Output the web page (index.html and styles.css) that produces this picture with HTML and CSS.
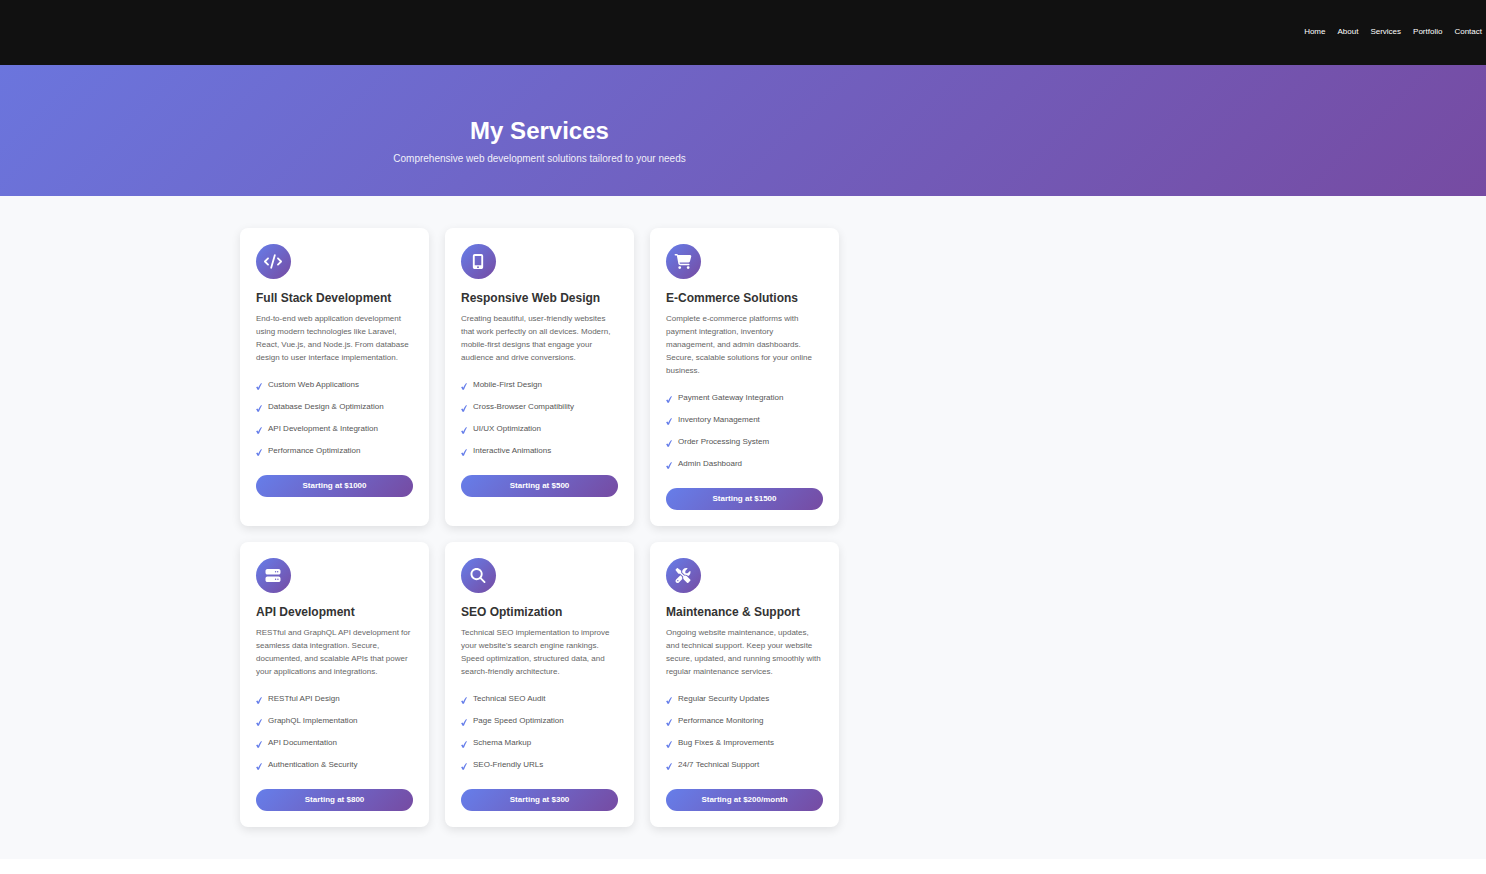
FILE: index.html
```html
<!DOCTYPE html>
<html lang="en">
<head>
<meta charset="utf-8">
<title>My Services</title>
<link rel="stylesheet" href="styles.css">
</head>
<body>
<svg class="sprite" aria-hidden="true">
  <symbol id="code" viewBox="0 0 640 512"><path d="M392.8 1.2c-17-4.9-34.7 5-39.6 22l-128 448c-4.9 17 5 34.7 22 39.6s34.7-5 39.6-22l128-448c4.9-17-5-34.7-22-39.6zm80.6 120.1c-12.5 12.5-12.5 32.8 0 45.3L562.7 256l-89.4 89.4c-12.5 12.5-12.5 32.8 0 45.3s32.8 12.5 45.3 0l112-112c12.5-12.5 12.5-32.8 0-45.3l-112-112c-12.5-12.5-32.8-12.5-45.3 0zm-306.7 0c-12.5-12.5-32.8-12.5-45.3 0l-112 112c-12.5 12.5-12.5 32.8 0 45.3l112 112c12.5 12.5 32.8 12.5 45.3 0s12.5-32.8 0-45.3L77.3 256l89.4-89.4c12.5-12.5 12.5-32.8 0-45.3z"/></symbol>
  <symbol id="mobile" viewBox="0 0 384 512"><path d="M16 64C16 28.7 44.7 0 80 0H304c35.3 0 64 28.7 64 64V448c0 35.3-28.7 64-64 64H80c-35.3 0-64-28.7-64-64V64zM224 448a32 32 0 1 0 -64 0 32 32 0 1 0 64 0zM304 64H80V384H304V64z" fill-rule="evenodd"/></symbol>
  <symbol id="cart" viewBox="0 0 576 512"><path d="M0 24C0 10.7 10.7 0 24 0H69.5c22 0 41.5 12.8 50.6 32h411c26.3 0 45.5 25 38.6 50.4l-41 152.3c-8.5 31.4-37 53.3-69.5 53.3H170.7l5.4 28.5c2.2 11.3 12.1 19.5 23.6 19.5H488c13.3 0 24 10.7 24 24s-10.7 24-24 24H199.7c-34.6 0-64.3-24.6-70.7-58.5L77.4 54.5c-.7-3.8-4-6.5-7.9-6.5H24C10.7 48 0 37.3 0 24zM128 464a48 48 0 1 1 96 0 48 48 0 1 1 -96 0zm336-48a48 48 0 1 1 0 96 48 48 0 1 1 0-96z"/></symbol>
  <symbol id="server" viewBox="0 0 512 512"><path fill-rule="evenodd" d="M64 32C28.7 32 0 60.7 0 96v64c0 35.3 28.7 64 64 64H448c35.3 0 64-28.7 64-64V96c0-35.3-28.7-64-64-64H64zm280 72a24 24 0 1 1 0 48 24 24 0 1 1 0-48zm48 24a24 24 0 1 1 48 0 24 24 0 1 1 -48 0zM64 288c-35.3 0-64 28.7-64 64v64c0 35.3 28.7 64 64 64H448c35.3 0 64-28.7 64-64V352c0-35.3-28.7-64-64-64H64zm280 72a24 24 0 1 1 0 48 24 24 0 1 1 0-48zm56 24a24 24 0 1 1 48 0 24 24 0 1 1 -48 0z"/></symbol>
  <symbol id="search" viewBox="0 0 512 512"><path fill-rule="evenodd" d="M416 208c0 45.9-14.9 88.3-40 122.7L502.6 457.4c12.5 12.5 12.5 32.8 0 45.3s-32.8 12.5-45.3 0L330.7 376c-34.4 25.2-76.8 40-122.7 40C93.1 416 0 322.9 0 208S93.1 0 208 0S416 93.1 416 208zM208 352a144 144 0 1 0 0-288 144 144 0 1 0 0 288z"/></symbol>
  <symbol id="tools" viewBox="0 0 512 512"><path fill-rule="evenodd" d="M78.6 5C69.1-2.4 55.6-1.5 47 7L7 47c-8.5 8.5-9.4 22-2.1 31.6l80 104c4.5 5.9 11.6 9.4 19 9.4h54.1l109 109c-14.7 29-10 65.4 14.3 89.6l112 112c12.5 12.5 32.8 12.5 45.3 0l64-64c12.5-12.5 12.5-32.8 0-45.3l-112-112c-24.2-24.2-60.6-29-89.6-14.3l-109-109V104c0-7.5-3.5-14.5-9.4-19L78.6 5zM19.9 396.1C7.2 408.8 0 426.1 0 444.1C0 481.6 30.4 512 67.9 512c18 0 35.3-7.2 48-19.9L233.7 374.3c-7.8-20.9-9-43.6-3.6-65.1l-61.7-61.7L19.9 396.1zM512 144c0-10.5-1.1-20.7-3.2-30.5c-2.4-11.2-16.1-14.1-24.2-6l-63.9 63.9c-3 3-7.1 4.7-11.3 4.7H352c-8.8 0-16-7.2-16-16V102.6c0-4.2 1.7-8.3 4.7-11.3l63.9-63.9c8.1-8.1 5.2-21.8-6-24.2C388.7 1.1 378.5 0 368 0C288.5 0 224 64.5 224 144l0 .8 85.3 85.3c36-9.1 75.8 .5 104 28.7L429 274.5c49-23 83-72.8 83-130.5zM56 432a24 24 0 1 1 48 0 24 24 0 1 1 -48 0z"/></symbol>
  <symbol id="check" viewBox="0 0 12 14"><path d="M0.2 8.400 L3 6.800 L4.600 9.400 C6 6 8 2.600 10 0.400 L12 0.400 C9.600 4.400 7.400 8.800 5.800 13.600 L3 13.600 C2.400 11.600 1.400 9.900 0.200 8.400Z"/></symbol>
</svg>

<header class="header">
  <nav class="nav">
    <a href="#">Home</a>
    <a href="#">About</a>
    <a href="#">Services</a>
    <a href="#">Portfolio</a>
    <a href="#">Contact</a>
  </nav>
</header>

<section class="hero">
  <div class="page">
    <h1>My Services</h1>
    <p>Comprehensive web development solutions tailored to your needs</p>
  </div>
</section>

<main class="services">
  <div class="page">
    <div class="grid">
      <article class="card">
        <div class="icon"><svg><use href="#code"/></svg></div>
        <h3>Full Stack Development</h3>
        <p>End-to-end web application development using modern technologies like Laravel, React, Vue.js, and Node.js. From database design to user interface implementation.</p>
        <ul>
          <li><svg><use href="#check"/></svg>Custom Web Applications</li>
          <li><svg><use href="#check"/></svg>Database Design &amp; Optimization</li>
          <li><svg><use href="#check"/></svg>API Development &amp; Integration</li>
          <li><svg><use href="#check"/></svg>Performance Optimization</li>
        </ul>
        <div class="price">Starting at $1000</div>
      </article>
      <article class="card">
        <div class="icon"><svg><use href="#mobile"/></svg></div>
        <h3>Responsive Web Design</h3>
        <p>Creating beautiful, user-friendly websites that work perfectly on all devices. Modern, mobile-first designs that engage your audience and drive conversions.</p>
        <ul>
          <li><svg><use href="#check"/></svg>Mobile-First Design</li>
          <li><svg><use href="#check"/></svg>Cross-Browser Compatibility</li>
          <li><svg><use href="#check"/></svg>UI/UX Optimization</li>
          <li><svg><use href="#check"/></svg>Interactive Animations</li>
        </ul>
        <div class="price">Starting at $500</div>
      </article>
      <article class="card">
        <div class="icon"><svg><use href="#cart"/></svg></div>
        <h3>E-Commerce Solutions</h3>
        <p>Complete e-commerce platforms with payment integration, inventory management, and admin dashboards. Secure, scalable solutions for your online business.</p>
        <ul>
          <li><svg><use href="#check"/></svg>Payment Gateway Integration</li>
          <li><svg><use href="#check"/></svg>Inventory Management</li>
          <li><svg><use href="#check"/></svg>Order Processing System</li>
          <li><svg><use href="#check"/></svg>Admin Dashboard</li>
        </ul>
        <div class="price">Starting at $1500</div>
      </article>
      <article class="card">
        <div class="icon"><svg><use href="#server"/></svg></div>
        <h3>API Development</h3>
        <p>RESTful and GraphQL API development for seamless data integration. Secure, documented, and scalable APIs that power your applications and integrations.</p>
        <ul>
          <li><svg><use href="#check"/></svg>RESTful API Design</li>
          <li><svg><use href="#check"/></svg>GraphQL Implementation</li>
          <li><svg><use href="#check"/></svg>API Documentation</li>
          <li><svg><use href="#check"/></svg>Authentication &amp; Security</li>
        </ul>
        <div class="price">Starting at $800</div>
      </article>
      <article class="card">
        <div class="icon"><svg><use href="#search"/></svg></div>
        <h3>SEO Optimization</h3>
        <p>Technical SEO implementation to improve your website's search engine rankings. Speed optimization, structured data, and search-friendly architecture.</p>
        <ul>
          <li><svg><use href="#check"/></svg>Technical SEO Audit</li>
          <li><svg><use href="#check"/></svg>Page Speed Optimization</li>
          <li><svg><use href="#check"/></svg>Schema Markup</li>
          <li><svg><use href="#check"/></svg>SEO-Friendly URLs</li>
        </ul>
        <div class="price">Starting at $300</div>
      </article>
      <article class="card">
        <div class="icon"><svg><use href="#tools"/></svg></div>
        <h3>Maintenance &amp; Support</h3>
        <p>Ongoing website maintenance, updates, and technical support. Keep your website secure, updated, and running smoothly with regular maintenance services.</p>
        <ul>
          <li><svg><use href="#check"/></svg>Regular Security Updates</li>
          <li><svg><use href="#check"/></svg>Performance Monitoring</li>
          <li><svg><use href="#check"/></svg>Bug Fixes &amp; Improvements</li>
          <li><svg><use href="#check"/></svg>24/7 Technical Support</li>
        </ul>
        <div class="price">Starting at $200/month</div>
      </article>
    </div>
  </div>
</main>
</body>
</html>
```
FILE: styles.css
```css
* {
  box-sizing: border-box;
  margin: 0;
  padding: 0;
}

body {
  background: #fff;
  color: #333;
  font-family: "Liberation Sans", Arial, sans-serif;
  font-size: 8px;
  line-height: 13px;
}

.sprite {
  display: none;
}

.page {
  max-width: 1079px;
}

.header {
  background: #111;
  padding: 25px 4px 27px;
}

.nav {
  display: flex;
  justify-content: flex-end;
  gap: 12px;
}

.nav a {
  color: #fff;
  text-decoration: none;
}

.hero {
  background: linear-gradient(135deg, #6b75dd, #764ba2);
  color: #fff;
  padding: 52px 0 29px;
  text-align: center;
}

.hero h1 {
  font-size: 24px;
  line-height: 28px;
  margin-bottom: 6px;
}

.hero p {
  font-size: 10px;
  line-height: 16px;
  opacity: 0.9;
}

.services {
  background: #f8f9fb;
  padding: 32px 0;
}

.grid {
  display: grid;
  grid-template-columns: repeat(3, 1fr);
  gap: 16px;
  max-width: 599px;
  margin: 0 auto;
}

.card {
  background: #fff;
  border-radius: 8px;
  box-shadow: 0 3px 10px rgba(0, 0, 0, 0.1);
  padding: 16px;
}

.icon {
  display: flex;
  align-items: center;
  justify-content: center;
  width: 35px;
  height: 35px;
  padding: 0 1px 1px 0;
  margin-bottom: 12px;
  border-radius: 50%;
  background: linear-gradient(135deg, #667eea, #764ba2);
}

.icon svg {
  width: 18px;
  height: 15px;
  fill: #fff;
}

.card h3 {
  font-size: 12px;
  line-height: 14px;
  margin-bottom: 7px;
}

.card p {
  color: #666;
  margin-bottom: 10px;
}

.card ul {
  list-style: none;
  margin-bottom: 13px;
}

.card li {
  display: flex;
  align-items: center;
  gap: 6px;
  color: #555;
  line-height: 22px;
}

.card li svg {
  width: 6px;
  height: 7px;
  margin-top: 2px;
  fill: #667eea;
}

.price {
  background: linear-gradient(135deg, #667eea, #764ba2);
  border-radius: 11px;
  color: #fff;
  font-weight: bold;
  line-height: 22px;
  text-align: center;
}
```
